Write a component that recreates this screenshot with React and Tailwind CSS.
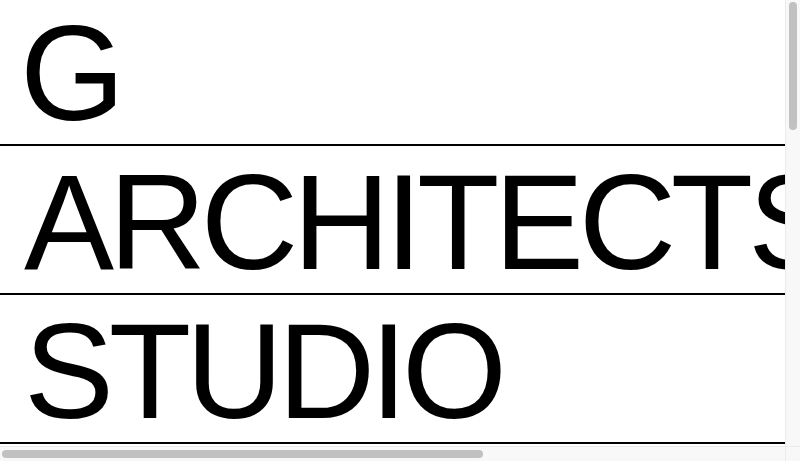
const rows = [
  { label: 'G', pad: 'pl-5 pt-[6px]' },
  { label: 'ARCHITECTS', pad: 'pl-6 pt-[9px]' },
  { label: 'STUDIO', pad: 'pl-6 pt-[9px]' },
];

export default function App() {
  return (
    <div className="h-[461px] w-[800px] flex flex-col overflow-hidden bg-white text-black font-['Liberation_Sans',Arial,sans-serif]">
      <div className="flex h-[446px]">
        {/* visible part of the page */}
        <div className="w-[785px] h-[446px] overflow-hidden">
          <header>
            {rows.map((row) => (
              <div
                key={row.label}
                className={`${row.pad} pb-[3px] border-b-2 border-black text-[135px] leading-none tracking-[-0.04em] whitespace-nowrap`}
              >
                {row.label}
              </div>
            ))}
          </header>
        </div>
        {/* vertical scrollbar */}
        <div className="w-[15px] h-[446px] bg-[#f8f8f8] border-l border-[#ebebeb] pl-[3px] pt-[2px]">
          <div className="w-[8px] h-[128px] rounded-full bg-[#c1c1c1]" />
        </div>
      </div>
      {/* horizontal scrollbar */}
      <div className="flex h-[15px]">
        <div className="w-[785px] h-[15px] bg-[#f8f8f8] border-t border-[#ebebeb] pl-[2px] pt-[3px]">
          <div className="w-[481px] h-[8px] rounded-full bg-[#c1c1c1]" />
        </div>
        <div className="w-[15px] h-[15px] bg-[#f8f8f8] border-t border-l border-[#ebebeb]" />
      </div>
    </div>
  );
}
